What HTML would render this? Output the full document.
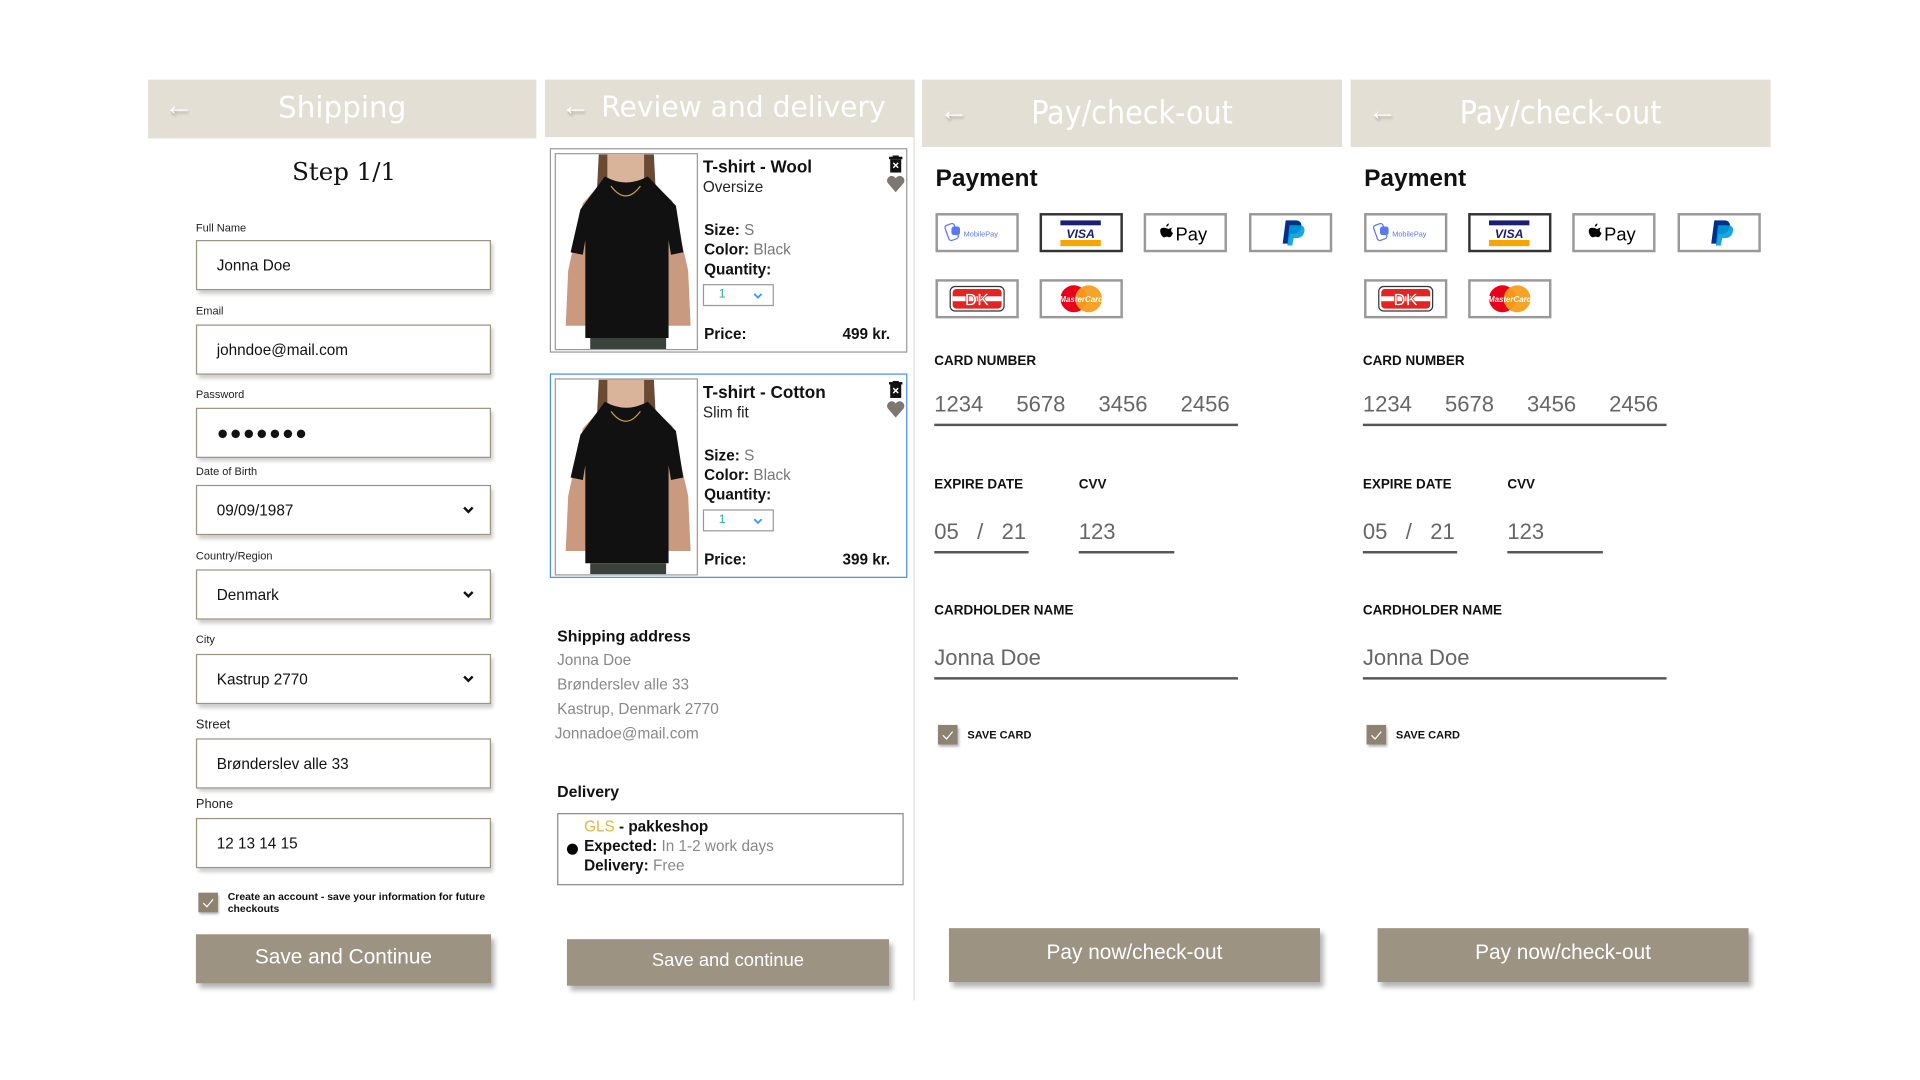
<!DOCTYPE html>
<html><head><meta charset="utf-8"><style>
html,body{margin:0;padding:0;background:#fff;width:1920px;height:1080px;overflow:hidden}
#w{position:absolute;left:0;top:0;width:1568px;height:882px;transform:scale(1.22449);transform-origin:0 0;font-family:"Liberation Sans",sans-serif;color:#111}
.a{position:absolute}
.hdr{position:absolute;background:#e4dfd5;color:#fff}
.hdr .t{position:absolute;white-space:nowrap}
.arr{position:absolute;color:#fff;font-size:24px;text-shadow:1px 2px 2px rgba(0,0,0,.25)}
.lbl{position:absolute;font-size:9px;color:#222}
.inp{position:absolute;left:160px;width:241px;height:41px;border:1px solid #9d9382;box-shadow:2px 3px 3px rgba(0,0,0,.2);background:#fff;font-size:12.5px;line-height:41px;box-sizing:border-box;padding-left:16px}
.chev{position:absolute;right:13px;top:16px}
.btn{position:absolute;background:#9d9382;color:#fff;text-align:center;font-size:17px;box-shadow:3px 4px 4px rgba(0,0,0,.3)}
.cb{position:absolute;width:16px;height:16px;background:#8e8270;box-shadow:1px 2px 2px rgba(0,0,0,.3)}
.card{position:absolute;left:449px;width:290px;height:165px;border:1px solid #999;background:#fff}
.card .t1{position:absolute;left:124px;top:6px;font-weight:bold;font-size:14px}
.card .t2{position:absolute;left:124px;top:24px;font-size:12.5px;color:#222}
.card .r{position:absolute;left:125px;font-size:12.5px;font-weight:bold}
.card .r span{font-weight:normal;color:#777}
.qs{position:absolute;left:124px;top:110px;width:56px;height:16px;border:1px solid #999;font-size:10px;color:#3a9;line-height:16px}
.qs i{position:absolute;left:12px;font-style:normal}
.qs svg{position:absolute;right:8px;top:6px}
.pic{position:absolute;left:3px;top:3px;width:115px;height:159px;border:1px solid #999;background:#fff;overflow:hidden}
.sa{position:absolute;left:455px;font-size:12.5px;color:#888}
.pi{position:absolute;width:64px;height:28px;border:2px solid #999;background:#fff;box-sizing:content-box}
.cl{position:absolute;font-size:11px;font-weight:bold}
.cv{position:absolute;font-size:18px;color:#666}
.ul{position:absolute;height:2px;background:#555}
</style></head><body><div id="w">

<div class="hdr" style="left:121px;top:65px;width:317px;height:48px">
 <div class="arr" style="left:13px;top:8px">&#8592;</div>
 <div class="t" style="left:0;width:317px;text-align:center;top:9px;font-size:24px;font-family:'DejaVu Sans','Liberation Sans',sans-serif">Shipping</div>
</div>
<div class="a" style="left:121px;width:320px;text-align:center;top:128px;font-size:20px;font-family:'DejaVu Serif','Liberation Serif',serif">Step 1/1</div>

<div class="lbl" style="left:160px;top:181px">Full Name</div>
<div class="inp" style="top:196px">Jonna Doe</div>
<div class="lbl" style="left:160px;top:249px">Email</div>
<div class="inp" style="top:265px">johndoe@mail.com</div>
<div class="lbl" style="left:160px;top:317px">Password</div>
<div class="inp" style="top:333px;font-size:16px;letter-spacing:1px">&#9679;&#9679;&#9679;&#9679;&#9679;&#9679;&#9679;</div>
<div class="lbl" style="left:160px;top:380px">Date of Birth</div>
<div class="inp" style="top:396px">09/09/1987<svg class="chev" width="9" height="7"><path d="M1 1.5l3.5 3.5 3.5-3.5" stroke="#111" stroke-width="2" fill="none"/></svg></div>
<div class="lbl" style="left:160px;top:449px">Country/Region</div>
<div class="inp" style="top:465px">Denmark<svg class="chev" width="9" height="7"><path d="M1 1.5l3.5 3.5 3.5-3.5" stroke="#111" stroke-width="2" fill="none"/></svg></div>
<div class="lbl" style="left:160px;top:517px">City</div>
<div class="inp" style="top:534px">Kastrup 2770<svg class="chev" width="9" height="7"><path d="M1 1.5l3.5 3.5 3.5-3.5" stroke="#111" stroke-width="2" fill="none"/></svg></div>
<div class="lbl" style="left:160px;top:586px;font-size:10.5px">Street</div>
<div class="inp" style="top:603px">Brønderslev alle 33</div>
<div class="lbl" style="left:160px;top:651px;font-size:10.5px">Phone</div>
<div class="inp" style="top:668px">12 13 14 15</div>
<div class="cb" style="left:162px;top:729px"><svg width="16" height="16"><path d="M4 8.5l3 3 5-6" stroke="#fff" stroke-width="1" fill="none"/></svg></div>
<div class="a" style="left:186px;top:727px;font-size:8.5px;font-weight:bold;line-height:10px;width:220px">Create an account - save your information for future checkouts</div>
<div class="btn" style="left:160px;top:763px;width:241px;height:40px;line-height:38px">Save and Continue</div>

<div class="hdr" style="left:445px;top:65px;width:301px;height:47px">
 <div class="arr" style="left:13px;top:8px">&#8592;</div>
 <div class="t" style="left:46px;top:10px;font-size:23px;font-family:'DejaVu Sans','Liberation Sans',sans-serif">Review and delivery</div>
</div>
<div class="a" style="left:746px;top:65px;width:1px;height:752px;background:#ddd"></div>

<svg width="0" height="0" style="position:absolute"><defs>
<symbol id="ppl" viewBox="0 0 115 159">
<rect width="115" height="159" fill="#fff"/>
<path d="M35 0h45l2 40H33z" fill="#6b4a34"/>
<path d="M42 0h30v22q-15 8-30 0z" fill="#d9b39a"/>
<path d="M8 140 L10 95 22 40 40 20 Q57 28 75 20 L95 38 108 95 110 140z" fill="#c99a80"/>
<path d="M20 45 L40 18 Q57 28 75 18 L98 42 104 80 94 82 92 70 92 150 H24 L24 70 22 82 12 80z" fill="#111"/>
<path d="M45 26 Q57 42 69 26" stroke="#c9a23a" stroke-width="1" fill="none"/>
<rect x="28" y="150" width="62" height="9" fill="#3a423c"/>
</symbol></defs></svg>

<div class="card" style="top:121px">
 <div class="pic"><svg width="115" height="159"><use href="#ppl"/></svg></div>
 <div class="t1">T-shirt - Wool</div>
 <div class="t2">Oversize</div>
 <div class="r" style="top:59px">Size: <span>S</span></div>
 <div class="r" style="top:75px">Color: <span>Black</span></div>
 <div class="r" style="top:91px">Quantity:</div>
 <div class="qs"><i>1</i><svg width="8" height="6"><path d="M1 1l3 3 3-3" stroke="#39f" stroke-width="1.5" fill="none"/></svg></div>
 <div class="r" style="top:144px">Price:</div>
 <div class="r" style="top:144px;left:238px">499 kr.</div>
 <svg class="a" style="left:276px;top:5px" width="11" height="14"><rect x="0" y="1" width="11" height="2" fill="#111"/><rect x="3" y="0" width="5" height="2" fill="#111"/><rect x="1" y="3" width="9" height="11" fill="#111"/><path d="M3.5 6l4 4M7.5 6l-4 4" stroke="#fff" stroke-width="1.2"/></svg>
 <svg class="a" style="left:274px;top:21px" width="15" height="14"><path d="M7.5 14 L1 6.5 A3.6 3.6 0 0 1 7.5 2.5 A3.6 3.6 0 0 1 14 6.5z" fill="#7d776f"/></svg>
</div>

<div class="card" style="top:305px;border-color:#4a90e2">
 <div class="pic"><svg width="115" height="159"><use href="#ppl"/></svg></div>
 <div class="t1">T-shirt - Cotton</div>
 <div class="t2">Slim fit</div>
 <div class="r" style="top:59px">Size: <span>S</span></div>
 <div class="r" style="top:75px">Color: <span>Black</span></div>
 <div class="r" style="top:91px">Quantity:</div>
 <div class="qs"><i>1</i><svg width="8" height="6"><path d="M1 1l3 3 3-3" stroke="#39f" stroke-width="1.5" fill="none"/></svg></div>
 <div class="r" style="top:144px">Price:</div>
 <div class="r" style="top:144px;left:238px">399 kr.</div>
 <svg class="a" style="left:276px;top:5px" width="11" height="14"><rect x="0" y="1" width="11" height="2" fill="#111"/><rect x="3" y="0" width="5" height="2" fill="#111"/><rect x="1" y="3" width="9" height="11" fill="#111"/><path d="M3.5 6l4 4M7.5 6l-4 4" stroke="#fff" stroke-width="1.2"/></svg>
 <svg class="a" style="left:274px;top:21px" width="15" height="14"><path d="M7.5 14 L1 6.5 A3.6 3.6 0 0 1 7.5 2.5 A3.6 3.6 0 0 1 14 6.5z" fill="#7d776f"/></svg>
</div>

<div class="a" style="left:455px;top:512px;font-size:13px;font-weight:bold">Shipping address</div>
<div class="sa" style="top:532px">Jonna Doe</div>
<div class="sa" style="top:552px">Brønderslev alle 33</div>
<div class="sa" style="top:572px">Kastrup, Denmark 2770</div>
<div class="sa" style="top:592px;left:453px">Jonnadoe@mail.com</div>
<div class="a" style="left:455px;top:639px;font-size:13px;font-weight:bold">Delivery</div>
<div class="a" style="left:455px;top:664px;width:281px;height:57px;border:1px solid #888">
 <div class="a" style="left:7px;top:24px;width:9px;height:9px;border-radius:50%;background:#000"></div>
 <div class="a" style="left:21px;top:2px;font-size:12.5px;font-weight:bold;line-height:16px"><span style="color:#e0b93a;font-weight:normal">GLS</span> - pakkeshop<br>Expected: <span style="font-weight:normal;color:#888">In 1-2 work days</span><br>Delivery: <span style="font-weight:normal;color:#888">Free</span></div>
</div>
<div class="btn" style="left:463px;top:767px;width:263px;height:38px;line-height:36px;font-size:15px">Save and continue</div>

<div id="p3"></div>

<script>
function panel(dx){
return `
<div class="hdr" style="left:${753+dx}px;top:65px;width:343px;height:55px">
 <div class="arr" style="left:14px;top:12px">&#8592;</div>
 <div class="t" style="left:0;width:343px;text-align:center;top:13px;font-size:26px;font-family:'DejaVu Sans Condensed','DejaVu Sans',sans-serif">Pay/check-out</div>
</div>
<div class="a" style="left:${764+dx}px;top:135px;font-size:20px;font-weight:bold">Payment</div>
<div class="pi" style="left:${764+dx}px;top:174px"><svg width="64" height="28"><rect x="7" y="7" width="8" height="13" rx="2" transform="rotate(-20 11 13)" fill="none" stroke="#5a78f0" stroke-width="1"/><rect x="11" y="9" width="7" height="7" rx="2" fill="#5a78f0"/><text x="21" y="17" font-size="6" fill="#5a78f0" font-family="Liberation Sans">MobilePay</text></svg></div>
<div class="pi" style="left:${849+dx}px;top:174px;border-color:#333"><svg width="64" height="28"><rect x="15" y="4" width="33" height="4" fill="#1a1f71"/><rect x="15" y="20" width="33" height="5" fill="#f7a600"/><text x="31.5" y="18.5" font-size="10" font-weight="bold" font-style="italic" fill="#1a1f71" text-anchor="middle" font-family="Liberation Sans">VISA</text></svg></div>
<div class="pi" style="left:${934+dx}px;top:174px"><svg width="64" height="28"><path d="M15 10c1.5 0 2.5 1 3.2 1s1.8-1.1 3.3-1c-1.6 1-1.3 3.6.4 4.2-.5 1.5-1.6 3.6-2.8 3.6-.9 0-1.1-.6-2.2-.6s-1.4.6-2.2.6c-1.4 0-3.2-3-3.2-5.2 0-2 1.3-2.8 3.5-2.6z M18.5 6.5c.2 1.2-.8 2.5-2 2.6-.2-1.2.8-2.4 2-2.6z" fill="#000"/><text x="24" y="20.5" font-size="15" fill="#000" font-family="Liberation Sans">Pay</text></svg></div>
<div class="pi" style="left:${1020+dx}px;top:174px"><svg width="64" height="28"><path d="M28 4h8c4 0 5.5 2.5 4.5 6-1 3.5-3.5 5-7 5h-2l-1.5 8h-4.5z" fill="#003087"/><path d="M31 8h8c4 0 5 2.5 4 6-1 3.3-3.5 4.5-6.5 4.5h-2l-1.2 6h-4z" fill="#009cde" opacity=".9"/></svg></div>
<div class="pi" style="left:${764+dx}px;top:228px"><svg width="64" height="28"><rect x="10" y="4" width="44" height="20" rx="4" fill="#fff" stroke="#333" stroke-width="1"/><rect x="12" y="6" width="40" height="16" rx="3" fill="#e52421"/><rect x="12" y="12" width="40" height="4" fill="#fff"/><text x="32" y="19.5" font-size="14" font-weight="bold" fill="#fff" text-anchor="middle" font-family="Liberation Sans" stroke="#e52421" stroke-width=".6">DK</text></svg></div>
<div class="pi" style="left:${849+dx}px;top:228px"><svg width="64" height="28"><circle cx="26" cy="14" r="11" fill="#eb001b"/><circle cx="38" cy="14" r="11" fill="#f79e1b" opacity=".95"/><text x="32" y="16.5" font-size="6.5" font-style="italic" font-weight="bold" fill="#fff" text-anchor="middle" font-family="Liberation Sans">MasterCard</text></svg></div>
<div class="cl" style="left:${763+dx}px;top:289px">CARD NUMBER</div>
<div class="cv" style="left:${763+dx}px;top:320px;word-spacing:22px">1234 5678 3456 2456</div>
<div class="ul" style="left:${763+dx}px;top:346px;width:248px"></div>
<div class="cl" style="left:${763+dx}px;top:390px">EXPIRE DATE</div>
<div class="cl" style="left:${881+dx}px;top:390px">CVV</div>
<div class="cv" style="left:${763+dx}px;top:424px;white-space:pre">05   /   21</div>
<div class="cv" style="left:${881+dx}px;top:424px">123</div>
<div class="ul" style="left:${763+dx}px;top:450px;width:77px"></div>
<div class="ul" style="left:${881+dx}px;top:450px;width:78px"></div>
<div class="cl" style="left:${763+dx}px;top:493px">CARDHOLDER NAME</div>
<div class="cv" style="left:${763+dx}px;top:527px">Jonna Doe</div>
<div class="ul" style="left:${763+dx}px;top:553px;width:248px"></div>
<div class="cb" style="left:${766+dx}px;top:592px"><svg width="16" height="16"><path d="M4 8.5l3 3 5-6" stroke="#fff" stroke-width="1" fill="none"/></svg></div>
<div class="cl" style="left:${790+dx}px;top:595px;font-size:9px">SAVE CARD</div>
<div class="btn" style="left:${775+dx}px;top:758px;width:303px;height:44px;line-height:40px">Pay now/check-out</div>`;}
document.getElementById('p3').outerHTML=panel(0)+panel(350);
</script>
</div></body></html>
